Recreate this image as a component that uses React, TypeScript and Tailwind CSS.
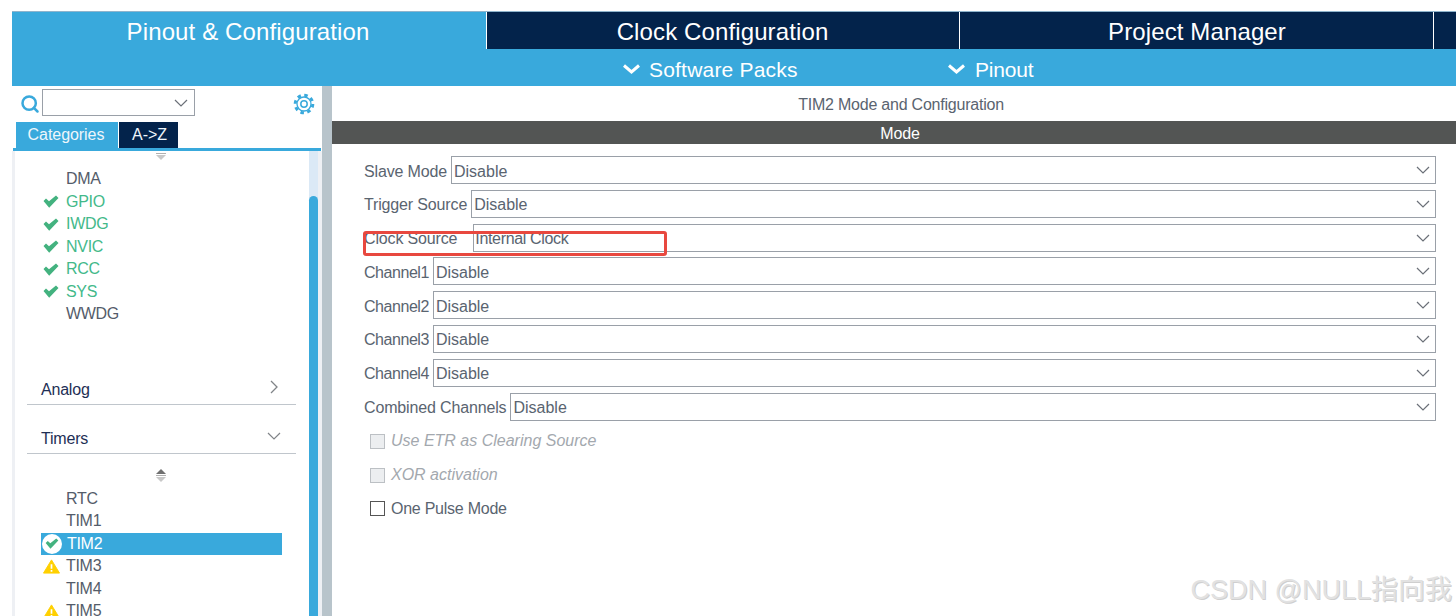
import { Search } from 'lucide-react'

const font = { fontFamily: '"Liberation Sans", Arial, sans-serif' }

function Chevron({ className }: { className: string }) {
  return (
    <svg viewBox="0 0 14 8" className={className} fill="none" stroke="currentColor">
      <path d="M1 1l6 6 6-6" strokeWidth="1.2" />
    </svg>
  )
}

function Check({ className }: { className: string }) {
  return (
    <svg viewBox="0 0 16 13" className={className}>
      <path d="M0.500 6l2.500-2.500 3 2.800L13 0.500l2.500 2.500L6.200 12.800z" fill="#43b27f" />
    </svg>
  )
}

function Warn({ className }: { className: string }) {
  return (
    <svg viewBox="0 0 18 15" className={className}>
      <path d="M9 0.500l8.500 14H0.500z" fill="#ffd000" stroke="#ffd000" strokeLinejoin="round" />
      <path d="M9 5v5M9 11.300v1.700" stroke="#fff" strokeWidth="1.800" />
    </svg>
  )
}

function Gear() {
  return (
    <svg viewBox="0 0 22 22" className="ml-auto mr-[7px] mt-[4px] h-[22px] w-[22px]" fill="none" stroke="#39a9dc">
      <circle cx="11" cy="11" r="8.800" strokeWidth="3" strokeDasharray="3.500 3.410" />
      <circle cx="11" cy="11" r="7" strokeWidth="1.300" />
      <circle cx="11" cy="11" r="3.200" strokeWidth="1.500" />
    </svg>
  )
}

function BarChevron({ className }: { className: string }) {
  return (
    <svg viewBox="0 0 17 10" className={className} fill="none" stroke="currentColor" strokeWidth="3">
      <path d="M1 1.500l7.500 6.500 7.500-6.500" />
    </svg>
  )
}

function SelectRow({ label, value, labelClass, valueClass }: { label: string; value: string; labelClass: string; valueClass?: string }) {
  return (
    <div className="flex h-[28px] items-center text-[16px] text-[#5a6470]">
      <span className={`pt-[3px] tracking-[-0.15px] ${labelClass}`}>{label}</span>
      <div className="flex h-full flex-1 items-center justify-between border border-[#9aa0a8] bg-white pl-[2px] pr-[5px]">
        <span className={`pt-[3px] ${valueClass ?? ''}`}>{value}</span>
        <Chevron className="h-[8px] w-[14px] text-[#6b7078]" />
      </div>
    </div>
  )
}

function Peripheral({ name, state }: { name: string; state?: 'ok' | 'warn' }) {
  const color = state === 'ok' ? 'text-[#43b98a]' : 'text-[#545c6a]'
  return (
    <div className={`flex h-[22.5px] items-center text-[16px] tracking-[-0.3px] ${color}`}>
      <span className="flex w-[28px] pl-[2px]">
        {state === 'ok' && <Check className="h-[13px] w-[16px]" />}
        {state === 'warn' && <Warn className="h-[15px] w-[17px]" />}
      </span>
      <span className="ml-[-3px]">{name}</span>
    </div>
  )
}

function ScrollMark({ up }: { up?: boolean }) {
  return (
    <div className="flex flex-col items-center">
      {up && <div className="h-0 w-0 border-x-[5px] border-b-[5px] border-x-transparent border-b-[#707070]" />}
      <div className="my-[1px] h-[1px] w-[10px] bg-[#b0b0b0]" />
      <div className="h-0 w-0 border-x-[5px] border-t-[5px] border-x-transparent border-t-[#c8c8c8]" />
    </div>
  )
}

function CheckOption({ label, disabled }: { label: string; disabled?: boolean }) {
  return (
    <div className={`flex h-[33.7px] items-center pl-[6px] text-[16px] ${disabled ? 'italic text-[#a3a8ae]' : 'tracking-[-0.25px] text-[#5a6470]'}`}>
      <span className={`mr-[6px] h-[15px] w-[15px] border ${disabled ? 'border-[#bcc0c4] bg-[#eceef0]' : 'border-[#555] bg-white'}`} />
      {label}
    </div>
  )
}

export default function App() {
  return (
    <div className="relative h-[616px] w-[1456px] overflow-hidden bg-white pl-[12px] pt-[11px]" style={font}>
      <div className="flex h-[38px] border-t border-[#8fb4cc] text-[24px] tracking-[0.12px] text-white">
        <div className="flex w-[474px] items-center justify-center bg-[#39a9dc] pr-[2px] pt-[3px]">Pinout &amp; Configuration</div>
        <div className="flex w-[473px] items-center justify-center border-l border-white bg-[#03234b] pr-[1px] pt-[3px]">Clock Configuration</div>
        <div className="flex w-[474px] items-center justify-center border-l border-white bg-[#03234b] pl-[1px] pt-[3px]">Project Manager</div>
        <div className="flex-1 border-l border-white bg-[#03234b]" />
      </div>
      <div className="h-[37px] bg-[#39a9dc] text-[21px] text-white">
        <div className="flex h-full items-center pl-[611px] pt-[3px]">
          <BarChevron className="mr-[9px] h-[10px] w-[17px]" />
          <span className="w-[299px] pt-[2px] tracking-[0.2px]">Software Packs</span>
          <BarChevron className="mr-[10px] h-[10px] w-[17px]" />
          <span className="pt-[2px] tracking-[-0.2px]">Pinout</span>
        </div>
      </div>

      <div className="flex h-[530px]">
        <div className="flex w-[310px] flex-col">
          <div className="flex h-[36px] items-start pl-[8px] pt-[3px]">
            <Search className="mt-[5px] h-[20px] w-[20px] text-[#39a9dc]" strokeWidth={3} />
            <div className="ml-[2px] flex h-[27px] w-[153px] items-center justify-end border border-[#9aa0a8] pr-[6px]">
              <Chevron className="h-[8px] w-[14px] text-[#6b7078]" />
            </div>
            <Gear />
          </div>
          <div className="flex h-[26px] pl-[4px] text-[16px] tracking-[-0.05px] text-[#eef6fb]">
            <div className="flex w-[102px] items-center justify-center bg-[#39a9dc] pr-[2px]">Categories</div>
            <div className="ml-[1px] flex w-[59px] items-center justify-center bg-[#03234b] pl-[2px]">A-&gt;Z</div>
          </div>
          <div className="ml-[1px] h-[3px] w-[308px] bg-[#39a9dc]" />
          <div className="flex flex-1 overflow-hidden">
            <div className="w-[3px] bg-[#eef0f4]" />
            <div className="w-[294px] pt-[1px]">
              <div className="flex h-[14px] justify-center pr-[2px]"><ScrollMark /></div>
              <div className="pl-[26px] pt-[2px]">
                <Peripheral name="DMA" />
                <Peripheral name="GPIO" state="ok" />
                <Peripheral name="IWDG" state="ok" />
                <Peripheral name="NVIC" state="ok" />
                <Peripheral name="RCC" state="ok" />
                <Peripheral name="SYS" state="ok" />
                <Peripheral name="WWDG" />
              </div>
              <div className="ml-[12px] mr-[13px] mt-[49px] flex h-[30px] items-center justify-between border-b border-[#c0c6cc] pl-[14px] pr-[18px] pt-[2px] text-[16px] tracking-[-0.2px] text-[#1e2f55]">
                Analog
                <svg viewBox="0 0 8 14" className="mb-[6px] h-[14px] w-[8px] text-[#808488]" fill="none" stroke="currentColor" strokeWidth="1.300">
                  <path d="M1 1l6 6-6 6" />
                </svg>
              </div>
              <div className="ml-[12px] mr-[13px] mt-[19px] flex h-[30px] items-center justify-between border-b border-[#c0c6cc] pl-[14px] pr-[15px] pt-[2px] text-[16px] tracking-[-0.2px] text-[#1e2f55]">
                Timers
                <Chevron className="mb-[6px] h-[8px] w-[14px] text-[#808488]" />
              </div>
              <div className="flex h-[34px] items-center justify-center pr-[2px] pt-[9px]"><ScrollMark up /></div>
              <div className="pl-[26px]">
                <Peripheral name="RTC" />
                <Peripheral name="TIM1" />
                <div className="flex h-[22.5px] w-[241px] items-center bg-[#39a9dc] text-[16px] tracking-[-0.3px] text-white">
                  <span className="ml-[1px] mr-[5px] flex h-[20px] w-[20px] items-center justify-center rounded-full bg-white">
                    <Check className="h-[11px] w-[14px]" />
                  </span>
                  TIM2
                </div>
                <Peripheral name="TIM3" state="warn" />
                <Peripheral name="TIM4" />
                <Peripheral name="TIM5" state="warn" />
              </div>
            </div>
            <div className="flex w-[9px] flex-col bg-[#dbe9f6]">
              <div className="mt-[45px] flex-1 rounded-t-[5px] bg-[#39a9dc]" />
            </div>
            <div className="w-[4px] bg-[#eef0f4]" />
          </div>
        </div>
        <div className="w-[10px] bg-[#b8c4cb]" />

        <div className="flex-1">
          <div className="flex h-[35px] items-center justify-center pl-[14px] pt-[2px] text-[16px] tracking-[-0.22px] text-[#5a6470]">TIM2 Mode and Configuration</div>
          <div className="flex h-[23px] items-center justify-center bg-[#535554] pl-[12px] pt-[3px] text-[16px] tracking-[-0.1px] text-white">Mode</div>
          <div className="flex flex-col gap-[5.8px] pl-[32px] pr-[20px] pt-[12px]">
            <SelectRow label="Slave Mode" value="Disable" labelClass="mr-[4px]" />
            <SelectRow label="Trigger Source" value="Disable" labelClass="mr-[4px]" />
            <SelectRow label="Clock Source" value="Internal Clock" labelClass="mr-[16px]" valueClass="ml-[-1px] tracking-[-0.35px]" />
            <SelectRow label="Channel1" value="Disable" labelClass="mr-[4px] tracking-[-0.45px]" />
            <SelectRow label="Channel2" value="Disable" labelClass="mr-[4px] tracking-[-0.45px]" />
            <SelectRow label="Channel3" value="Disable" labelClass="mr-[4px] tracking-[-0.45px]" />
            <SelectRow label="Channel4" value="Disable" labelClass="mr-[4px] tracking-[-0.45px]" />
            <SelectRow label="Combined Channels" value="Disable" labelClass="mr-[4px]" />
          </div>
          <div className="pl-[32px] pt-[4px]">
            <CheckOption label="Use ETR as Clearing Source" disabled />
            <CheckOption label="XOR activation" disabled />
            <CheckOption label="One Pulse Mode" />
          </div>
        </div>
      </div>

      <div className="absolute left-[363px] top-[231px] h-[25px] w-[304px] rounded-[3px] border-[3px] border-[#e8483f]" />
      <div className="absolute bottom-[12px] right-[4px] text-[27px] leading-none text-[#e2e2e2] [text-shadow:1px_1px_0px_#cfcfcf]" style={{ fontFamily: '"Liberation Sans", "Noto Sans CJK SC", sans-serif' }}>CSDN @NULL指向我</div>
    </div>
  )
}
